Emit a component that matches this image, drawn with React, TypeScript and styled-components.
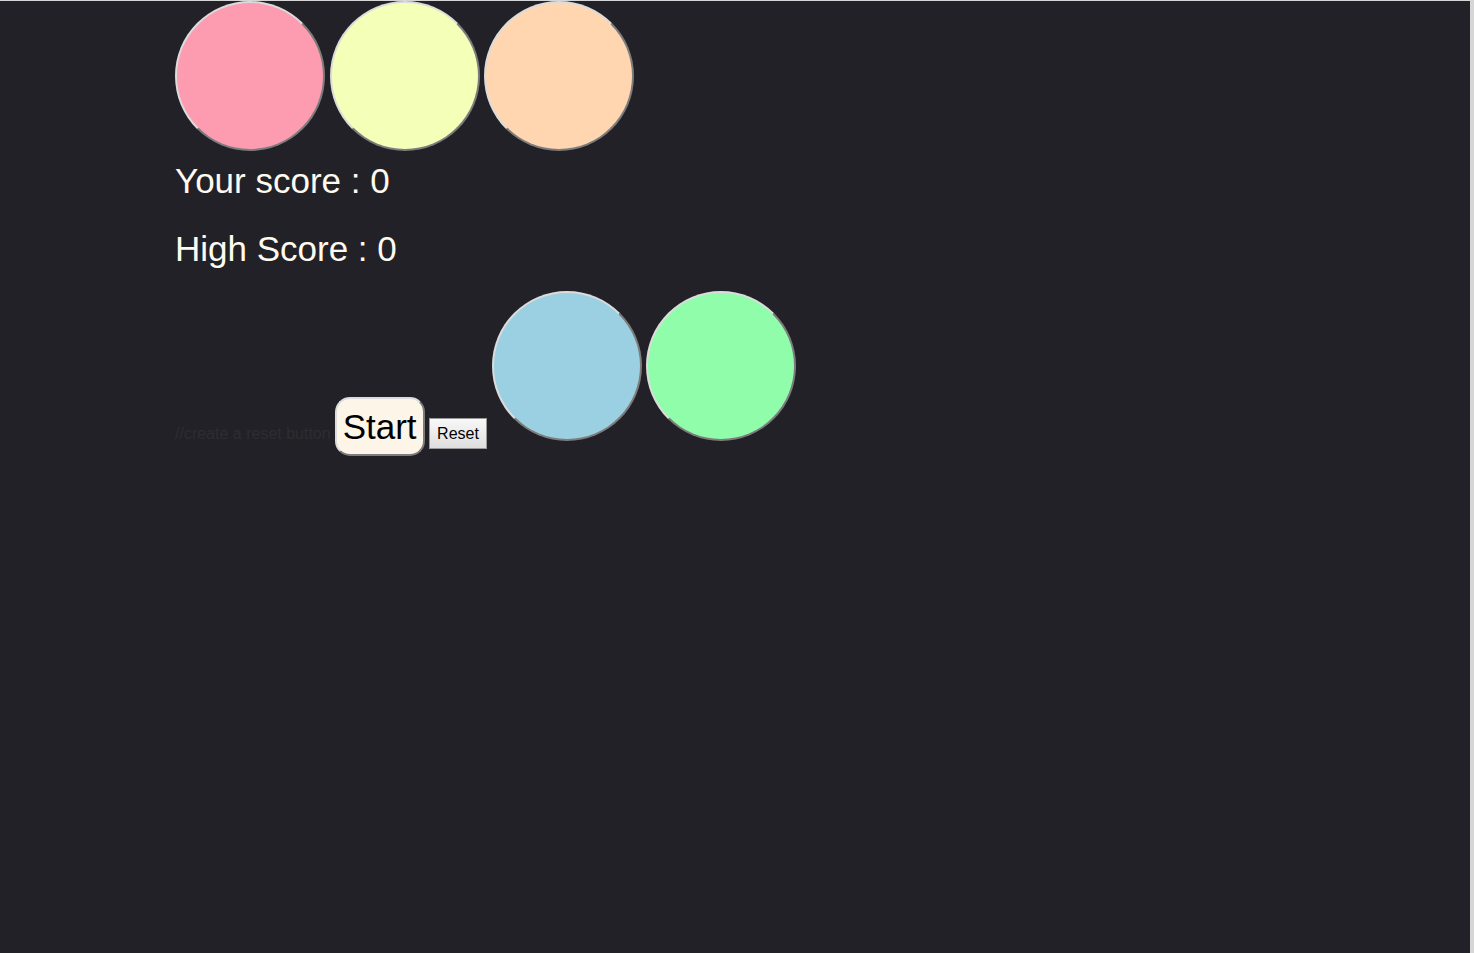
import { FC } from 'react';
import styled, { createGlobalStyle } from 'styled-components'

const GlobalStyle = createGlobalStyle`
  html, body {
    margin: 0;
    padding: 0;
    background-color: #d6d6d6;
  }
  body {
    font-family: "Liberation Sans", Arial, sans-serif;
  }
`

const topColors = ['#fd9bb0', '#f4ffb8', '#ffd6b0']
const bottomColors = ['#9bd0e3', '#90fdaa']

const App: FC = () => {
  return (
    <PageSC>
      <GlobalStyle />
      <TopRowSC>
        {topColors.map(color => (
          <CircleSC key={color} $color={color} />
        ))}
      </TopRowSC>
      <ScoreSC>Your score : 0</ScoreSC>
      <HighScoreSC>High Score : 0</HighScoreSC>
      <BottomRowSC>
        <CommentSC>//create a reset button</CommentSC>
        <StartButtonSC>Start</StartButtonSC>
        <ResetButtonSC>Reset</ResetButtonSC>
        {bottomColors.map(color => (
          <CircleSC key={color} $color={color} $inline />
        ))}
      </BottomRowSC>
    </PageSC>
  );
};

export default App;

const PageSC = styled('div')`
  margin-top: 1px;
  width: 1470px;
  height: 952px;
  box-sizing: border-box;
  padding-left: 175px;
  background-color: #222127;
  color: #fffaf0;
  overflow: hidden;
`
const TopRowSC = styled('div')`
  display: flex;
  gap: 4.5px;
`
const CircleSC = styled('button')<{ $color: string; $inline?: boolean }>`
  width: 150px;
  height: 150px;
  padding: 0;
  border-radius: 50%;
  border: 2px solid;
  border-color: #dcdcdc #7c7c7c #7c7c7c #dcdcdc;
  background-color: ${p => p.$color};
  cursor: pointer;
  display: ${p => (p.$inline ? 'inline-block' : 'block')};
  margin-right: ${p => (p.$inline ? '4px' : '0')};
  vertical-align: baseline;
`
const ScoreSC = styled('div')`
  margin-top: 11px;
  font-size: 35px;
  line-height: 38px;
`
const HighScoreSC = styled('div')`
  margin-top: 30px;
  font-size: 35px;
  line-height: 38px;
`
const BottomRowSC = styled('div')`
  margin-top: 23px;
  white-space: nowrap;
`
const CommentSC = styled('span')`
  font-size: 16px;
  color: #2e2d32;
  margin-right: 4px;
`
const StartButtonSC = styled('button')`
  display: inline-block;
  font-family: "Liberation Sans", Arial, sans-serif;
  font-size: 35px;
  line-height: 40px;
  padding: 8px 6px 7px;
  margin: 0 4px 0 0;
  color: #000;
  background-color: #fdf5e8;
  border: 2px solid;
  border-color: #dcdcdc #7c7c7c #7c7c7c #dcdcdc;
  border-radius: 15px;
  cursor: pointer;
`
const ResetButtonSC = styled('button')`
  display: inline-block;
  font-family: "Liberation Sans", Arial, sans-serif;
  font-size: 16px;
  line-height: 18px;
  padding: 6px 7.5px 5px;
  margin: 0 5px 0 0;
  color: #000;
  background: linear-gradient(#f8f8f8, #dedede);
  border: 1px solid #9a9a9a;
  border-radius: 0;
  cursor: pointer;
`
